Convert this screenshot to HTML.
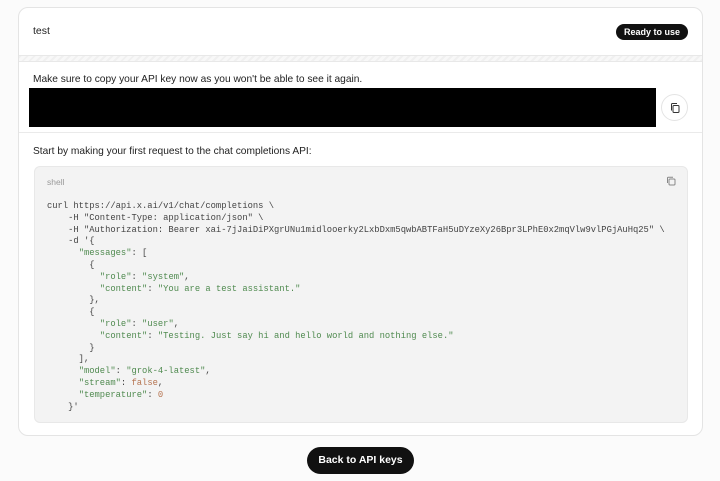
<!DOCTYPE html>
<html><head><meta charset="utf-8"><style>
*{margin:0;padding:0;box-sizing:border-box}
body{width:720px;height:481px;background:#fbfbfb;font-family:"Liberation Sans",sans-serif;color:#111;position:relative;overflow:hidden}
.card{position:absolute;left:18px;top:7px;width:685px;height:429px;background:#fff;border:1px solid #e4e4e4;border-radius:10px;overflow:hidden}
.t{position:absolute;font-size:10.2px;color:#222}
.badge{position:absolute;left:597px;top:16px;width:72px;height:16px;background:#111;color:#fff;border-radius:8px;font-size:9px;font-weight:bold;text-align:center;line-height:16px}
.stripe{position:absolute;left:0;top:47px;width:100%;height:7px;background:repeating-linear-gradient(135deg,#f0f0f0 0 2px,#f8f8f8 2px 5px);border-top:1px solid #e8e8e8;border-bottom:1px solid #e8e8e8}
.key{position:absolute;left:10px;top:80px;width:627px;height:39px;background:#000}
.cbtn{position:absolute;left:642px;top:86px;width:27px;height:27px;border:1px solid #e4e4e4;border-radius:50%;background:#fff}
.div{position:absolute;left:0;top:124px;width:100%;height:1px;background:#eaeaea}
.code{position:absolute;left:15px;top:158px;width:654px;height:257px;background:#f3f3f3;border:1px solid #e8e8e8;border-radius:6px}
pre{position:absolute;left:12px;top:34px;font-family:"Liberation Mono",monospace;font-size:8.8px;line-height:11.8px;color:#444}
.s{color:#4f8a4f}.n{color:#b5734f}
.btn{position:absolute;left:307px;top:447px;width:107px;height:27px;background:#111;color:#fff;border-radius:14px;font-size:10.5px;font-weight:bold;text-align:center;line-height:27px}
</style></head><body>
<div class="card">
<div class="t" style="left:14px;top:17px;font-size:10.5px">test</div>
<div class="badge">Ready to use</div>
<div class="stripe"></div>
<div class="t" style="left:14px;top:66px">Make sure to copy your API key now as you won't be able to see it again.</div>
<div class="key"></div>
<div class="cbtn"><svg width="27" height="27" viewBox="0 0 27 27"><rect x="11" y="10.5" width="6" height="7" rx="1" fill="none" stroke="#333" stroke-width="1"/><path d="M9.5 15.5v-6a1 1 0 0 1 1-1h4.5" fill="none" stroke="#333" stroke-width="1"/></svg></div>
<div class="div"></div>
<div class="t" style="left:14px;top:138px">Start by making your first request to the chat completions API:</div>
<div class="code">
<div style="position:absolute;left:12px;top:10px;font-size:8.5px;color:#999">shell</div>
<svg style="position:absolute;left:630px;top:8px" width="12" height="12" viewBox="0 0 12 12"><rect x="4" y="4" width="6" height="6" rx="1" fill="none" stroke="#888"/><path d="M2.5 8V3a.8.8 0 0 1 .8-.8H8" fill="none" stroke="#888"/></svg>
<pre>curl https://api.x.ai/v1/chat/completions \
    -H "Content-Type: application/json" \
    -H "Authorization: Bearer xai-7jJaiDiPXgrUNu1midlooerky2LxbDxm5qwbABTFaH5uDYzeXy26Bpr3LPhE0x2mqVlw9vlPGjAuHq25" \
    -d '{
      <span class="s">"messages"</span>: [
        {
          <span class="s">"role"</span>: <span class="s">"system"</span>,
          <span class="s">"content"</span>: <span class="s">"You are a test assistant."</span>
        },
        {
          <span class="s">"role"</span>: <span class="s">"user"</span>,
          <span class="s">"content"</span>: <span class="s">"Testing. Just say hi and hello world and nothing else."</span>
        }
      ],
      <span class="s">"model"</span>: <span class="s">"grok-4-latest"</span>,
      <span class="s">"stream"</span>: <span class="n">false</span>,
      <span class="s">"temperature"</span>: <span class="n">0</span>
    }'</pre>
</div>
</div>
<div class="btn">Back to API keys</div>
</body></html>
